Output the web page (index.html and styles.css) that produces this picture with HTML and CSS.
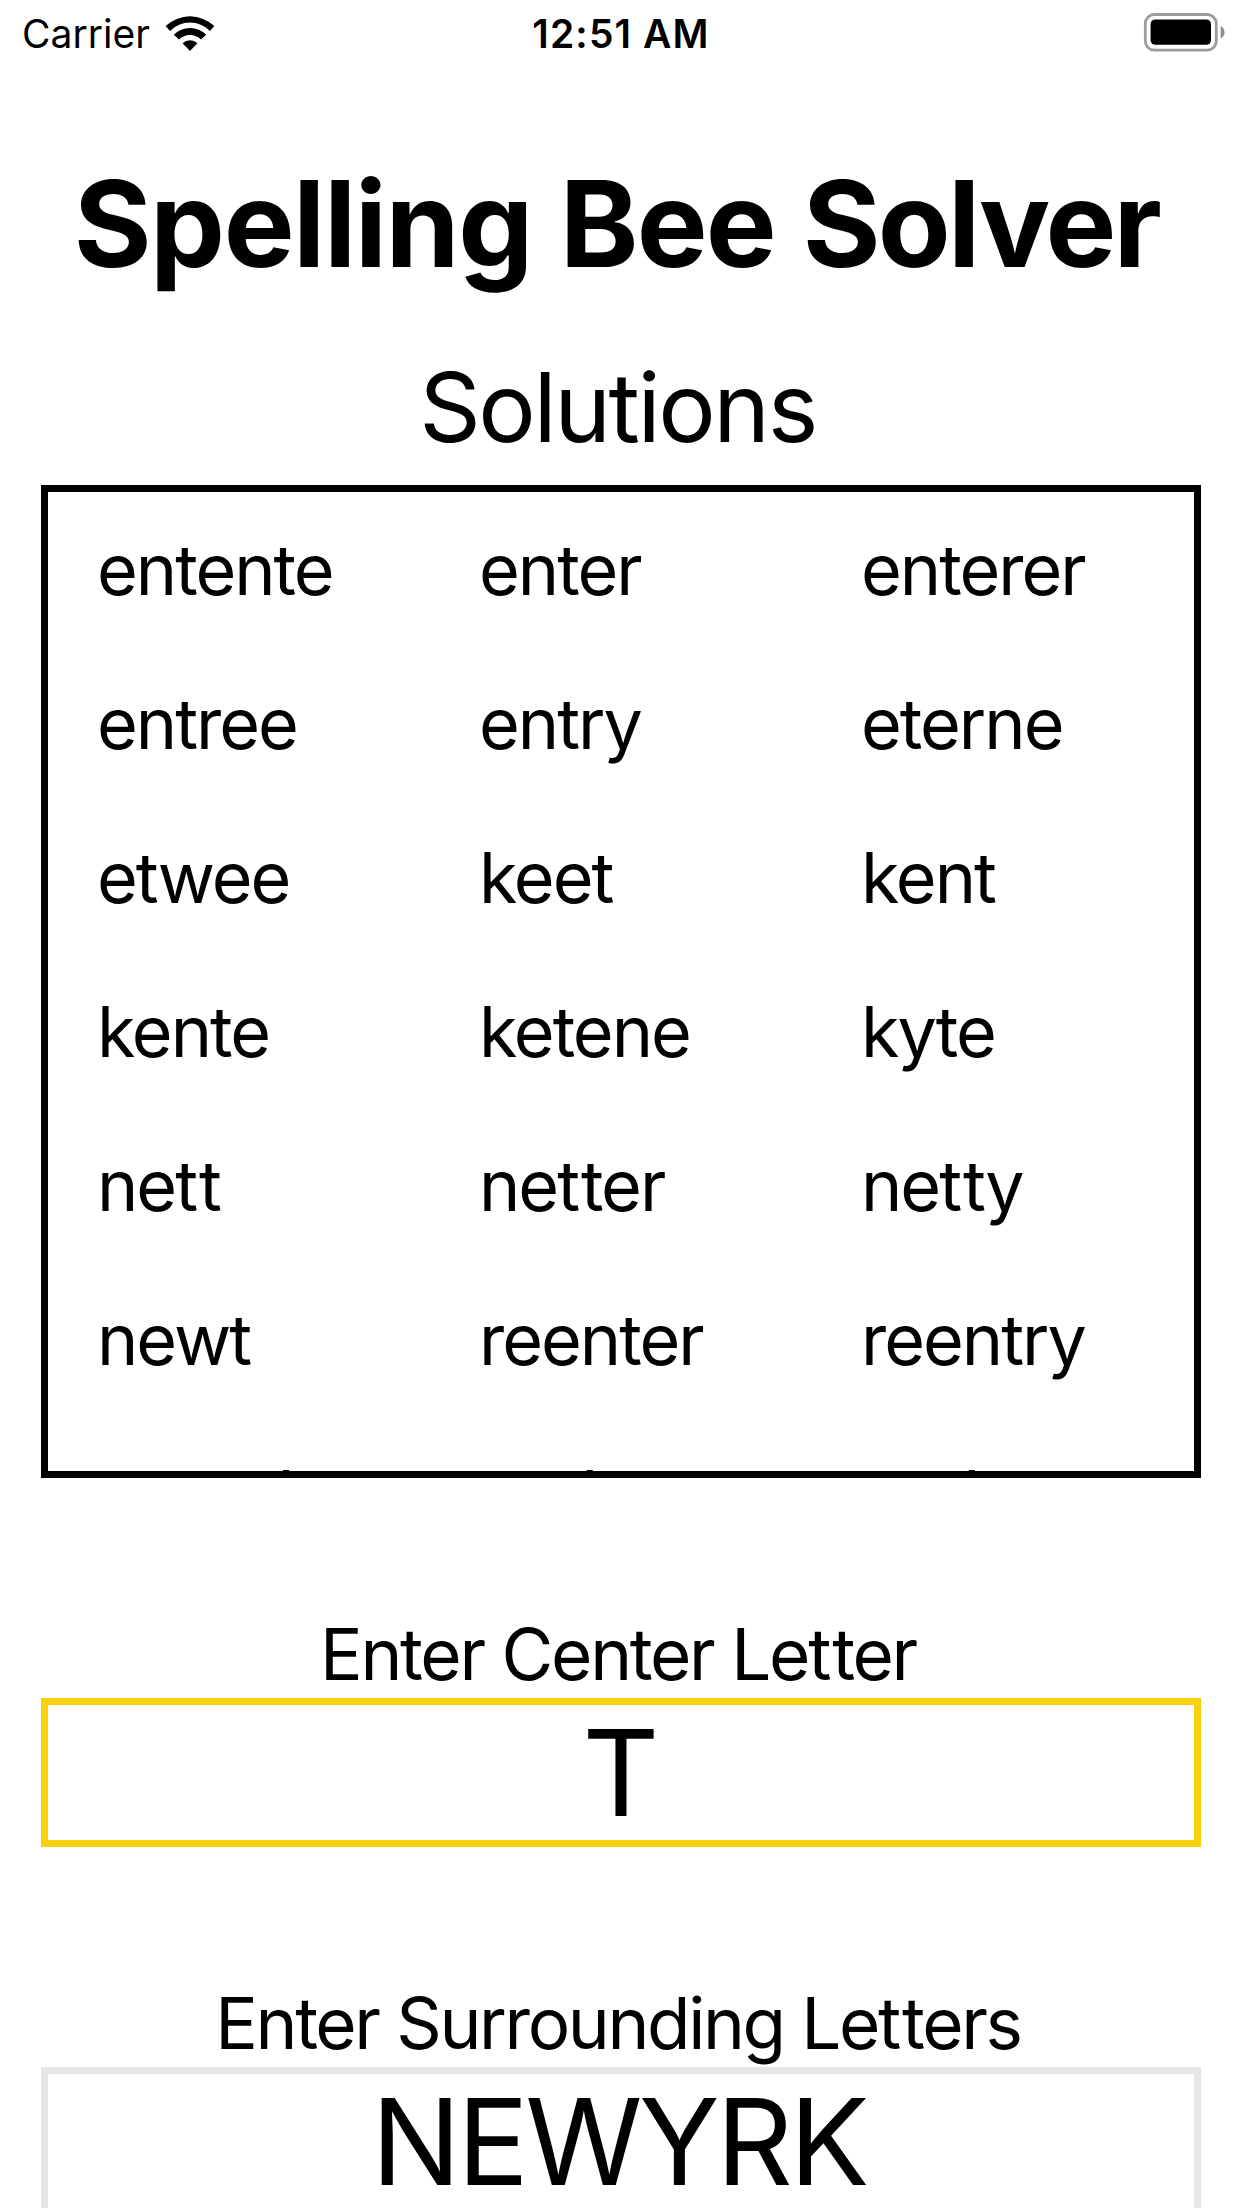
FILE: index.html
```
<!DOCTYPE html>
<html lang="en">
<head>
<meta charset="utf-8">
<title>Spelling Bee Solver</title>
<link rel="stylesheet" href="styles.css">
</head>
<body>
<div class="screen">
  <header class="status">
    <div class="status-left">
      <span class="carrier">Carrier</span>
      <svg class="wifi" width="50" height="38" viewBox="-25 -36.5 50 38" aria-hidden="true">
        <path d="M-24.4 -24.4A35.4 35.4 0 0 1 24.4 -24.4L20 -19.6A28.2 28.2 0 0 0 -20 -19.6Z"/>
        <path d="M-16.2 -15.8A23 23 0 0 1 16.2 -15.8L11 -10.9A15.6 15.6 0 0 0 -11 -10.9Z"/>
        <path d="M-7.4 -7.2A10.6 10.6 0 0 1 7.4 -7.2L0 0.4Z"/>
      </svg>
    </div>
    <span class="clock">12:51 AM</span>
    <div class="status-right">
      <svg width="82" height="40" viewBox="1143 12 82 40" aria-hidden="true">
        <rect x="1145.3" y="14.5" width="71" height="35.6" rx="9" fill="none" stroke="#9c9c9c" stroke-width="2.8"/>
        <rect x="1150.6" y="19.4" width="60.4" height="25.4" rx="4.6"/>
        <path d="M1220.6 26A7 7 0 0 1 1220.6 38.6Z" fill="#8f8f8f"/>
      </svg>
    </div>
  </header>
  <main class="content">
    <h1 class="title"><span class="loose">Spelling</span> Bee <span class="tight">Solver</span></h1>
    <h2 class="subtitle">Solutions</h2>
    <div class="solutions">
      <span>entente</span><span>enter</span><span>enterer</span>
      <span>entree</span><span>entry</span><span>eterne</span>
      <span>etwee</span><span>keet</span><span>kent</span>
      <span>kente</span><span>ketene</span><span>kyte</span>
      <span>ne<span class="pair">t</span>t</span><span>ne<span class="pair">t</span>ter</span><span>ne<span class="pair">t</span>ty</span>
      <span>newt</span><span>reenter</span><span>reentry</span>
      <span class="peek">rennet</span><span class="peek">rente</span><span class="peek">renter</span>
    </div>
    <section class="group">
      <div class="label">Enter Center Le<span class="pair">t</span>ter</div>
      <div class="field field-active">T</div>
    </section>
    <section class="group">
      <div class="label label-wide">Enter Surrounding Le<span class="pair">t</span>ters</div>
      <div class="field field-letters">NEWYRK</div>
    </section>
  </main>
</div>
</body>
</html>
```
FILE: styles.css
```
* { box-sizing: border-box; }
body { margin: 0; background: #fff; color: #000; font-family: Inter, "Liberation Sans", sans-serif; }
.screen { width: 1242px; height: 2208px; overflow: hidden; }

.status { display: grid; grid-template-columns: 1fr auto 1fr; align-items: start; height: 67px; padding: 10px 17px 0 22px; font-size: 39px; line-height: 47px; }
.status-left { display: flex; align-items: start; gap: 15px; }
.wifi { margin-top: 4px; }
.clock { padding-right: 5px; font-weight: 600; letter-spacing: 1.13px; }
.status-right { display: flex; justify-content: flex-end; padding-top: 2px; }

.content { padding: 85px 41px 0; }
.title { margin: 0; padding-right: 9px; font-size: 119px; font-weight: 700; line-height: 144px; letter-spacing: -1.83px; word-spacing: 1.5px; text-align: center; white-space: nowrap; }
.loose { letter-spacing: -1.45px; }
.tight { letter-spacing: -2.7px; }
.subtitle { margin: 53px 0 0; padding-right: 7px; font-size: 96px; font-weight: 400; line-height: 116px; letter-spacing: -2.45px; text-align: center; }

.solutions { display: grid; grid-template-columns: repeat(3, 382px); grid-auto-rows: 154px; height: 993px; margin-top: 20px; padding-left: 49px; border: 7px solid #000; overflow: hidden; font-size: 70px; line-height: 155px; letter-spacing: -2px; }
.peek { margin-top: -2px; }
.pair { letter-spacing: 0.8px; }

.group { margin-top: 133px; }
.label { height: 87px; padding-right: 6px; font-size: 71px; line-height: 87px; letter-spacing: -2.3px; text-align: center; }
.label-wide { letter-spacing: -2.38px; }
.field { height: 149px; border: 7px solid #e6e6e6; font-size: 119px; line-height: 137px; text-align: center; }
.field-active { border-color: #f9d109; }
.field-letters { padding-right: 5px; letter-spacing: -3.5px; }
```
